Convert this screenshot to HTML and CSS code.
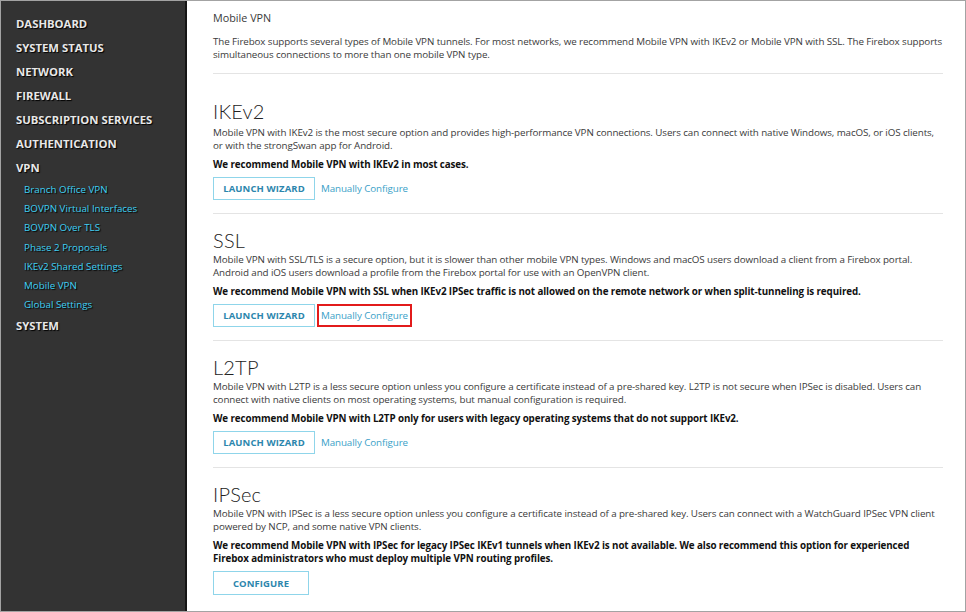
FILE: index.html
```html
<!DOCTYPE html>
<html>
<head>
  <meta name="viewport" content="width=device-width, initial-scale=1">
  <title>Mobile VPN</title>
  <link rel="stylesheet" href="styles.css">
</head>
<body>
  <div id="frame">
    <div id="sidebar">
      <div class="nav-item">DASHBOARD</div>
      <div class="nav-item">SYSTEM STATUS</div>
      <div class="nav-item">NETWORK</div>
      <div class="nav-item">FIREWALL</div>
      <div class="nav-item">SUBSCRIPTION SERVICES</div>
      <div class="nav-item">AUTHENTICATION</div>
      <div class="nav-item">VPN</div>
      <div class="sub-nav">
        <a href="#">Branch Office VPN</a>
        <a href="#">BOVPN Virtual Interfaces</a>
        <a href="#">BOVPN Over TLS</a>
        <a href="#">Phase 2 Proposals</a>
        <a href="#">IKEv2 Shared Settings</a>
        <a href="#">Mobile VPN</a>
        <a href="#">Global Settings</a>
      </div>
      <div class="nav-item">SYSTEM</div>
    </div>
    <div id="main">
      <div class="crumb">Mobile VPN</div>
      <p class="intro">The Firebox supports several types of Mobile VPN tunnels. For most networks, we recommend Mobile VPN with IKEv2 or Mobile VPN with SSL. The Firebox supports simultaneous connections to more than one mobile VPN type.</p>

      <div class="section first">
        <h2>IKEv2</h2>
        <p>Mobile VPN with IKEv2 is the most secure option and provides high-performance VPN connections. Users can connect with native Windows, macOS, or iOS clients, or with the strongSwan app for Android.</p>
        <p class="rec">We recommend Mobile VPN with IKEv2 in most cases.</p>
        <div class="actions">
          <button class="btn">LAUNCH WIZARD</button>
          <a class="manual" href="#">Manually Configure</a>
        </div>
      </div>

      <div class="section">
        <h2>SSL</h2>
        <p>Mobile VPN with SSL/TLS is a secure option, but it is slower than other mobile VPN types. Windows and macOS users download a client from a Firebox portal. Android and iOS users download a profile from the Firebox portal for use with an OpenVPN client.</p>
        <p class="rec">We recommend Mobile VPN with SSL when IKEv2 IPSec traffic is not allowed on the remote network or when split-tunneling is required.</p>
        <div class="actions">
          <button class="btn">LAUNCH WIZARD</button>
          <a class="manual highlight" href="#">Manually Configure</a>
        </div>
      </div>

      <div class="section">
        <h2>L2TP</h2>
        <p>Mobile VPN with L2TP is a less secure option unless you configure a certificate instead of a pre-shared key. L2TP is not secure when IPSec is disabled. Users can connect with native clients on most operating systems, but manual configuration is required.</p>
        <p class="rec">We recommend Mobile VPN with L2TP only for users with legacy operating systems that do not support IKEv2.</p>
        <div class="actions">
          <button class="btn">LAUNCH WIZARD</button>
          <a class="manual" href="#">Manually Configure</a>
        </div>
      </div>

      <div class="section">
        <h2>IPSec</h2>
        <p>Mobile VPN with IPSec is a less secure option unless you configure a certificate instead of a pre-shared key. Users can connect with a WatchGuard IPSec VPN client powered by NCP, and some native VPN clients.</p>
        <p class="rec">We recommend Mobile VPN with IPSec for legacy IPSec IKEv1 tunnels when IKEv2 is not available. We also recommend this option for experienced Firebox administrators who must deploy multiple VPN routing profiles.</p>
        <div class="actions">
          <button class="btn wide">CONFIGURE</button>
        </div>
      </div>
    </div>
  </div>
</body>
</html>
```

FILE: styles.css
```css
html, body {
  margin: 0;
  background-color: #fff;
  font-family: "Open Sans", sans-serif;
}

#frame {
  width: 966px;
  height: 612px;
  box-sizing: border-box;
  border: 1px solid #a3a3a3;
  display: flex;
  overflow: hidden;
}

#sidebar {
  width: 184px;
  flex-shrink: 0;
  background-color: #333;
  border-right: 2px solid #151515;
  padding-top: 11px;
}

.nav-item {
  font-size: 11.3px;
  font-weight: 700;
  line-height: 24px;
  color: #e8e8e8;
  padding-left: 15px;
  text-shadow: 1px 1px 1px #000;
}

.sub-nav a {
  display: block;
  font-size: 9.8px;
  line-height: 19.2px;
  color: #3fd0f4;
  text-decoration: none;
  padding-left: 23px;
  text-shadow: 1px 1px 1px #000;
}

#main {
  flex: 1;
  padding: 9px 22px 0 26px;
  font-size: 9.8px;
  letter-spacing: -0.1px;
  color: #3a3a3a;
}

.crumb {
  font-size: 10.8px;
  line-height: 16px;
  letter-spacing: 0;
}

p {
  margin: 0;
  line-height: 13px;
}

.intro {
  margin-top: 9px;
  margin-bottom: 12px;
}

.section {
  border-top: 1px solid #e4e4e4;
  padding: 14px 0 13px;
}

.section.first {
  padding-top: 25px;
}

.section.first h2 {
  margin-bottom: 3px;
}

h2 {
  margin: 0 0 1px;
  font-family: Lato, sans-serif;
  font-weight: 300;
  font-size: 20px;
  line-height: 24px;
  letter-spacing: 0.2px;
  color: #222;
}

.rec {
  margin-top: 6px;
  font-weight: 700;
  color: #111;
}

.actions {
  margin-top: 6px;
  display: flex;
  align-items: center;
}

.btn {
  height: 23px;
  min-width: 102px;
  padding: 0 8px;
  background: #fff;
  border: 1px solid #8fd5ea;
  color: #2c86ad;
  font-family: "Open Sans", sans-serif;
  font-size: 9.5px;
  font-weight: 700;
  letter-spacing: 0.1px;
}

.btn.wide {
  min-width: 96px;
  height: 24px;
}

.manual {
  margin-left: 2px;
  padding: 2px 2px;
  border: 2px solid transparent;
  color: #3a9fc8;
  text-decoration: none;
  line-height: 15px;
}

.manual.highlight {
  border-color: #e21b1b;
}
```
